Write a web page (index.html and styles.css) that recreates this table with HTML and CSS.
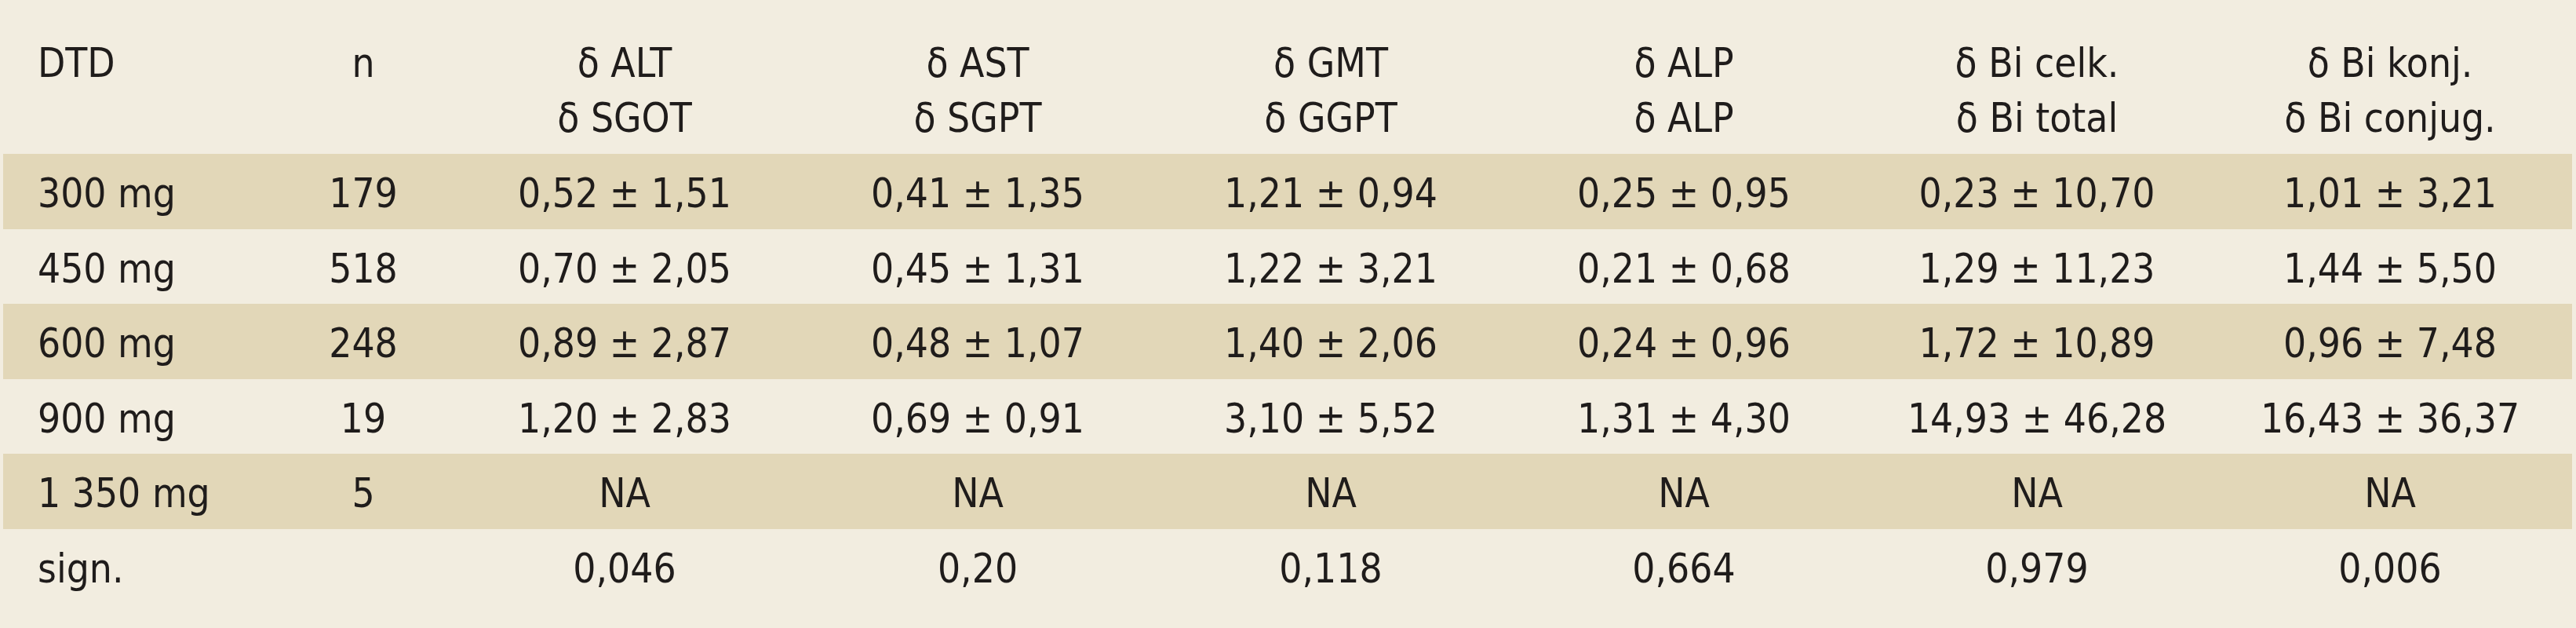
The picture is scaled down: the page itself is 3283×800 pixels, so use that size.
FILE: index.html
```
<!DOCTYPE html>
<html lang="cs">
<head>
<meta charset="utf-8">
<title>DTD table</title>
<link rel="stylesheet" href="styles.css">
</head>
<body>
<div class="table">
  <div class="row head">
    <div class="cell first">DTD</div>
    <div class="cell">n</div>
    <div class="cell">δ ALT<br>δ SGOT</div>
    <div class="cell">δ AST<br>δ SGPT</div>
    <div class="cell">δ GMT<br>δ GGPT</div>
    <div class="cell">δ ALP<br>δ ALP</div>
    <div class="cell">δ Bi celk.<br>δ Bi total</div>
    <div class="cell">δ Bi konj.<br>δ Bi conjug.</div>
  </div>
  <div class="row band">
    <div class="cell first">300 mg</div>
    <div class="cell">179</div>
    <div class="cell">0,52 ± 1,51</div>
    <div class="cell">0,41 ± 1,35</div>
    <div class="cell">1,21 ± 0,94</div>
    <div class="cell">0,25 ± 0,95</div>
    <div class="cell">0,23 ± 10,70</div>
    <div class="cell">1,01 ± 3,21</div>
  </div>
  <div class="row">
    <div class="cell first">450 mg</div>
    <div class="cell">518</div>
    <div class="cell">0,70 ± 2,05</div>
    <div class="cell">0,45 ± 1,31</div>
    <div class="cell">1,22 ± 3,21</div>
    <div class="cell">0,21 ± 0,68</div>
    <div class="cell">1,29 ± 11,23</div>
    <div class="cell">1,44 ± 5,50</div>
  </div>
  <div class="row band">
    <div class="cell first">600 mg</div>
    <div class="cell">248</div>
    <div class="cell">0,89 ± 2,87</div>
    <div class="cell">0,48 ± 1,07</div>
    <div class="cell">1,40 ± 2,06</div>
    <div class="cell">0,24 ± 0,96</div>
    <div class="cell">1,72 ± 10,89</div>
    <div class="cell">0,96 ± 7,48</div>
  </div>
  <div class="row">
    <div class="cell first">900 mg</div>
    <div class="cell">19</div>
    <div class="cell">1,20 ± 2,83</div>
    <div class="cell">0,69 ± 0,91</div>
    <div class="cell">3,10 ± 5,52</div>
    <div class="cell">1,31 ± 4,30</div>
    <div class="cell">14,93 ± 46,28</div>
    <div class="cell">16,43 ± 36,37</div>
  </div>
  <div class="row band">
    <div class="cell first">1 350 mg</div>
    <div class="cell">5</div>
    <div class="cell">NA</div>
    <div class="cell">NA</div>
    <div class="cell">NA</div>
    <div class="cell">NA</div>
    <div class="cell">NA</div>
    <div class="cell">NA</div>
  </div>
  <div class="row">
    <div class="cell first">sign.</div>
    <div class="cell"></div>
    <div class="cell">0,046</div>
    <div class="cell">0,20</div>
    <div class="cell">0,118</div>
    <div class="cell">0,664</div>
    <div class="cell">0,979</div>
    <div class="cell">0,006</div>
  </div>
</div>
</body>
</html>
```
FILE: styles.css
```
html, body {
  margin: 0;
  padding: 0;
  background: #f2ede0;
}

body {
  width: 3283px;
  height: 800px;
  overflow: hidden;
  padding-left: 4px;
  box-sizing: border-box;
  font-family: "DejaVu Sans Condensed", "DejaVu Sans", sans-serif;
  font-size: 51px;
  color: #1f1c1b;
}

.table {
  width: 3274px;
  background: #f2ede0;
}

.row {
  display: grid;
  grid-template-columns: 351px 216px repeat(6, 450px);
  padding-top: 7px;
  line-height: 88.5px;
}

.row.head {
  padding-top: 46px;
  height: 196px;
  box-sizing: border-box;
  line-height: 70px;
}

.band {
  background: #e2d7b8;
}

.cell {
  text-align: center;
  white-space: nowrap;
}

.cell.first {
  text-align: left;
  padding-left: 44px;
}
```
